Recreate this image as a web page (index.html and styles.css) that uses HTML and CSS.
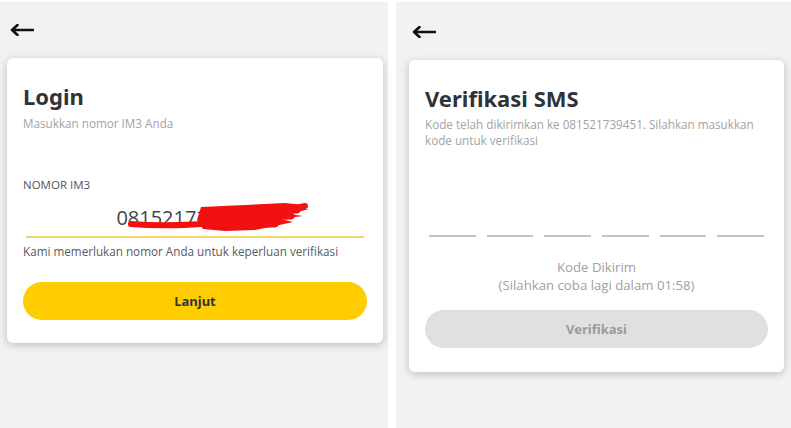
FILE: index.html
```html
<!DOCTYPE html>
<html lang="id">

<head>
    <meta charset="UTF-8">
    <meta name="viewport" content="width=device-width, initial-scale=1.0">
    <title>Login IM3</title>
    <link rel="stylesheet" href="styles.css">
</head>

<body>
    <div class="screen screen-login">
        <a class="back">
            <svg width="25" height="12" viewBox="0 0 25 12"><path d="M24 6H3M8.5 1L3 6l5.5 5" fill="none" stroke="#111" stroke-width="2.6" stroke-linecap="round" stroke-linejoin="round"/></svg>
        </a>
        <div class="card">
            <h1 class="title">Login</h1>
            <p class="sub">Masukkan nomor IM3 Anda</p>
            <div class="label">NOMOR IM3</div>
            <div class="phone">
                <span class="phone-num">081521739451</span>
                <!-- coretan merah -->
                <svg class="scribble" width="190" height="34" viewBox="0 0 190 34">
                    <path d="M76 7 L120 5 L160 3 L180 5 L162 9 L184 9 L164 14 L178 16 L156 19 L168 22 L150 26 L130 30 L100 31 L78 29 L72 20 Z" fill="#f21010"/>
                    <path d="M6 24 C40 27 70 25 100 22 C130 19 150 12 180 6" fill="none" stroke="#f21010" stroke-width="6" stroke-linecap="round"/>
                    <path d="M80 12 L172 10 M84 18 L166 16 M90 25 L150 24" fill="none" stroke="#f21010" stroke-width="7" stroke-linecap="round"/>
                </svg>
            </div>
            <p class="help">Kami memerlukan nomor Anda untuk keperluan verifikasi</p>
            <button class="btn btn-yellow">Lanjut</button>
        </div>
    </div>

    <div class="screen screen-sms">
        <a class="back">
            <svg width="25" height="12" viewBox="0 0 25 12"><path d="M24 6H3M8.5 1L3 6l5.5 5" fill="none" stroke="#111" stroke-width="2.6" stroke-linecap="round" stroke-linejoin="round"/></svg>
        </a>
        <div class="card card-sms">
            <h1 class="title">Verifikasi SMS</h1>
            <p class="sub">Kode telah dikirimkan ke 081521739451. Silahkan masukkan kode untuk verifikasi</p>
            <div class="otp">
                <span></span>
                <span></span>
                <span></span>
                <span></span>
                <span></span>
                <span></span>
            </div>
            <p class="resend">Kode Dikirim<br>(Silahkan coba lagi dalam 01:58)</p>
            <button class="btn btn-grey">Verifikasi</button>
        </div>
    </div>
</body>

</html>
```

FILE: styles.css
```css
body {
    margin: 0;
    padding-top: 2px;
    height: 426px;
    display: flex;
    gap: 8px;
    background-color: #fff;
    font-family: "Open Sans", "Noto Sans", sans-serif;
    color: #333;
    overflow: hidden;
}

.screen {
    background-color: #f2f2f2;
    display: flex;
    flex-direction: column;
}

.screen-login {
    width: 388px;
    padding: 0 5px 0 7px;
    box-sizing: border-box;
}

.screen-sms {
    flex: 1;
    padding: 0 7px 0 13px;
}

.back {
    display: block;
    height: 12px;
    margin-top: 22px;
    margin-left: 2px;
}

.screen-sms .back {
    margin-top: 24px;
}

.back svg {
    display: block;
}

.card {
    margin-top: 22px;
    background-color: #fff;
    border-radius: 6px;
    box-shadow: 0 2px 8px rgba(0, 0, 0, 0.22);
    padding: 24px 16px 23px;
}

.card-sms {
    padding-bottom: 24px;
}

.title {
    margin: 0;
    font-family: "Noto Sans", sans-serif;
    font-size: 22px;
    line-height: 28px;
    font-weight: 700;
    color: #2f3337;
}

.sub {
    margin: 5px 0 0;
    font-size: 11.7px;
    line-height: 16px;
    color: #a3a3a3;
}

.screen-sms .sub {
    margin-top: 4px;
}

.label {
    margin-top: 46px;
    font-size: 11.5px;
    line-height: 16px;
    color: #555;
}

.phone {
    position: relative;
    margin: 5px 3px 0;
    height: 38px;
    border-bottom: 2px solid #efd46a;
    text-align: center;
    padding-right: 20px;
}

.phone-num {
    font-size: 20px;
    line-height: 40px;
    color: #444;
}

.scribble {
    position: absolute;
    left: 99px;
    top: 2px;
}

.help {
    margin: 5px 0 0;
    font-size: 11.7px;
    line-height: 16px;
    color: #5a5a5a;
}

.btn {
    display: block;
    width: 100%;
    height: 38px;
    border: none;
    border-radius: 19px;
    font-family: "Noto Sans", sans-serif;
    font-size: 13px;
    font-weight: 700;
}

.btn-yellow {
    margin-top: 23px;
    background-color: #ffcc00;
    color: #333;
}

.btn-grey {
    margin-top: 16px;
    background-color: #e0e0e0;
    color: #9a9a9a;
}

.otp {
    margin: 0 4px;
    height: 89px;
    display: flex;
    gap: 11px;
    align-items: flex-end;
}

.otp span {
    flex: 1;
    height: 2px;
    background-color: #c4c4c4;
}

.resend {
    margin: 21px 0 0;
    text-align: center;
    font-size: 13.2px;
    line-height: 18px;
    color: #a0a0a0;
}
```
